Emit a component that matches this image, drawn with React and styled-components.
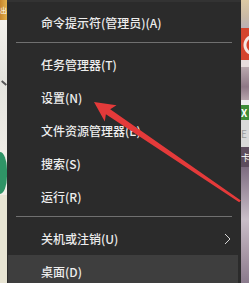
import React from 'react'
import styled, { createGlobalStyle } from 'styled-components'

const GlobalStyle = createGlobalStyle`
  html, body {
    margin: 0;
    padding: 0;
    background: #2b2b2b;
  }
`

const items = [
  { label: '命令提示符(管理员)(A)' },
  { sep: true },
  { label: '任务管理器(T)' },
  { label: '设置(N)' },
  { label: '文件资源管理器(E)' },
  { label: '搜索(S)' },
  { label: '运行(R)' },
  { sep: true },
  { label: '关机或注销(U)', sub: true },
  { label: '桌面(D)', active: true },
]

function App() {
  return (
    <Page>
      <GlobalStyle />
      <LeftStrip>
        <Seg $h={20} $bg="linear-gradient(90deg, #c8862c, #e2b14e)">
          <Glyph $size={7}>出</Glyph>
        </Seg>
        <Seg $h={130} $bg="linear-gradient(180deg, #f4f2ee, #e4e4de 45%, #eeece6)">
          <Mark />
        </Seg>
        <Seg $h={45} $bg="#f1efe8">
          <Blob />
        </Seg>
        <Seg $h={88} $bg="#e8e5d4" />
      </LeftStrip>

      <Menu>
        {items.map((it, i) =>
          it.sep ? (
            <Separator key={i} />
          ) : (
            <Item key={i} $active={it.active}>
              <span>{it.label}</span>
              {it.sub && (
                <svg width="7" height="12" viewBox="0 0 7 12">
                  <path d="M1 1 L6 6 L1 11" fill="none" stroke="#d6d6d6" strokeWidth="1" />
                </svg>
              )}
            </Item>
          )
        )}
      </Menu>

      <RightStrip>
        <Seg $h={28} $bg="linear-gradient(180deg, #dcc9a4, #c9b9a6 60%, #b9b0b6)" />
        <Seg $h={32} $bg="radial-gradient(circle at 13px 17px, transparent 7px, #f6e8e4 8px, #f6e8e4 10px, transparent 11px), #d4452e" />
        <Seg $h={7} $bg="#e6dcdc" />
        <Seg $h={33} $bg="linear-gradient(180deg, #b9a8ae, #8e7886 60%, #b6a4ac)" />
        <Seg $h={5} $bg="#eeeeee" />
        <Seg $h={15} $bg="#3f8d38">
          <Glyph $size={10} $bold>X</Glyph>
        </Seg>
        <Seg $h={27} $bg="#d9d9d9">
          <Glyph $size={10} $dark>E</Glyph>
        </Seg>
        <Seg $h={20} $bg="#5d4d5e">
          <Glyph $size={9}>卡</Glyph>
        </Seg>
        <Seg $h={116} $bg="linear-gradient(180deg, #7d6c80, #c9bec8 45%, #a898a6 75%, #8a7a8c)" />
      </RightStrip>

      <Arrow width="249" height="283" viewBox="0 0 249 283">
        <polygon
          points="94,102 116.5,105.2 110.2,109.3 240.9,200.6 239.2,202.2 105.9,114.2 104.8,121.4"
          fill="#e43a3a"
        />
      </Arrow>
    </Page>
  )
}

export default App

const Page = styled.div`
  position: relative;
  display: flex;
  width: 249px;
  height: 283px;
  overflow: hidden;
  background: #2b2b2b;
`

const LeftStrip = styled.div`
  width: 7px;
  flex-shrink: 0;
  display: flex;
  flex-direction: column;
`

const RightStrip = styled.div`
  width: 12px;
  flex-shrink: 0;
  display: flex;
  flex-direction: column;
`

const Seg = styled.div`
  position: relative;
  height: ${p => p.$h}px;
  flex-shrink: 0;
  background: ${p => p.$bg};
  overflow: hidden;
  display: flex;
  align-items: center;
`

const Glyph = styled.span`
  font-family: "Noto Sans CJK SC", "Liberation Sans", sans-serif;
  font-size: ${p => p.$size}px;
  font-weight: ${p => (p.$bold ? 700 : 400)};
  color: ${p => (p.$dark ? '#9a9a9a' : '#fff')};
  line-height: 1;
  margin-left: 0;
`

const Mark = styled.div`
  position: absolute;
  left: 1px;
  top: 62px;
  width: 6px;
  height: 2px;
  background: #555;
  transform: rotate(40deg);
`

const Blob = styled.div`
  width: 7px;
  height: 42px;
  border-radius: 0 8px 8px 0 / 0 20px 20px 0;
  background: #2f9466;
`

const Menu = styled.div`
  width: 230px;
  flex-shrink: 0;
  background: #2b2b2b;
  border-top: 2px solid #333;
  padding: 4px 3px 0 1px;
  display: flex;
  flex-direction: column;
`

const Item = styled.div`
  height: 33px;
  flex-shrink: 0;
  display: flex;
  align-items: center;
  justify-content: space-between;
  padding: 0 7px 0 33px;
  background: ${p => (p.$active ? '#3e3e3e' : 'transparent')};
  font-family: "Noto Sans CJK SC", "Liberation Sans", sans-serif;
  font-size: 12px;
  font-weight: 500;
  color: #ededed;
  white-space: nowrap;
`

const Separator = styled.div`
  height: 1px;
  flex-shrink: 0;
  margin: 3px 6px 5px 8px;
  background: #707070;
`

const Arrow = styled.svg`
  position: absolute;
  left: 0;
  top: 0;
  pointer-events: none;
`
